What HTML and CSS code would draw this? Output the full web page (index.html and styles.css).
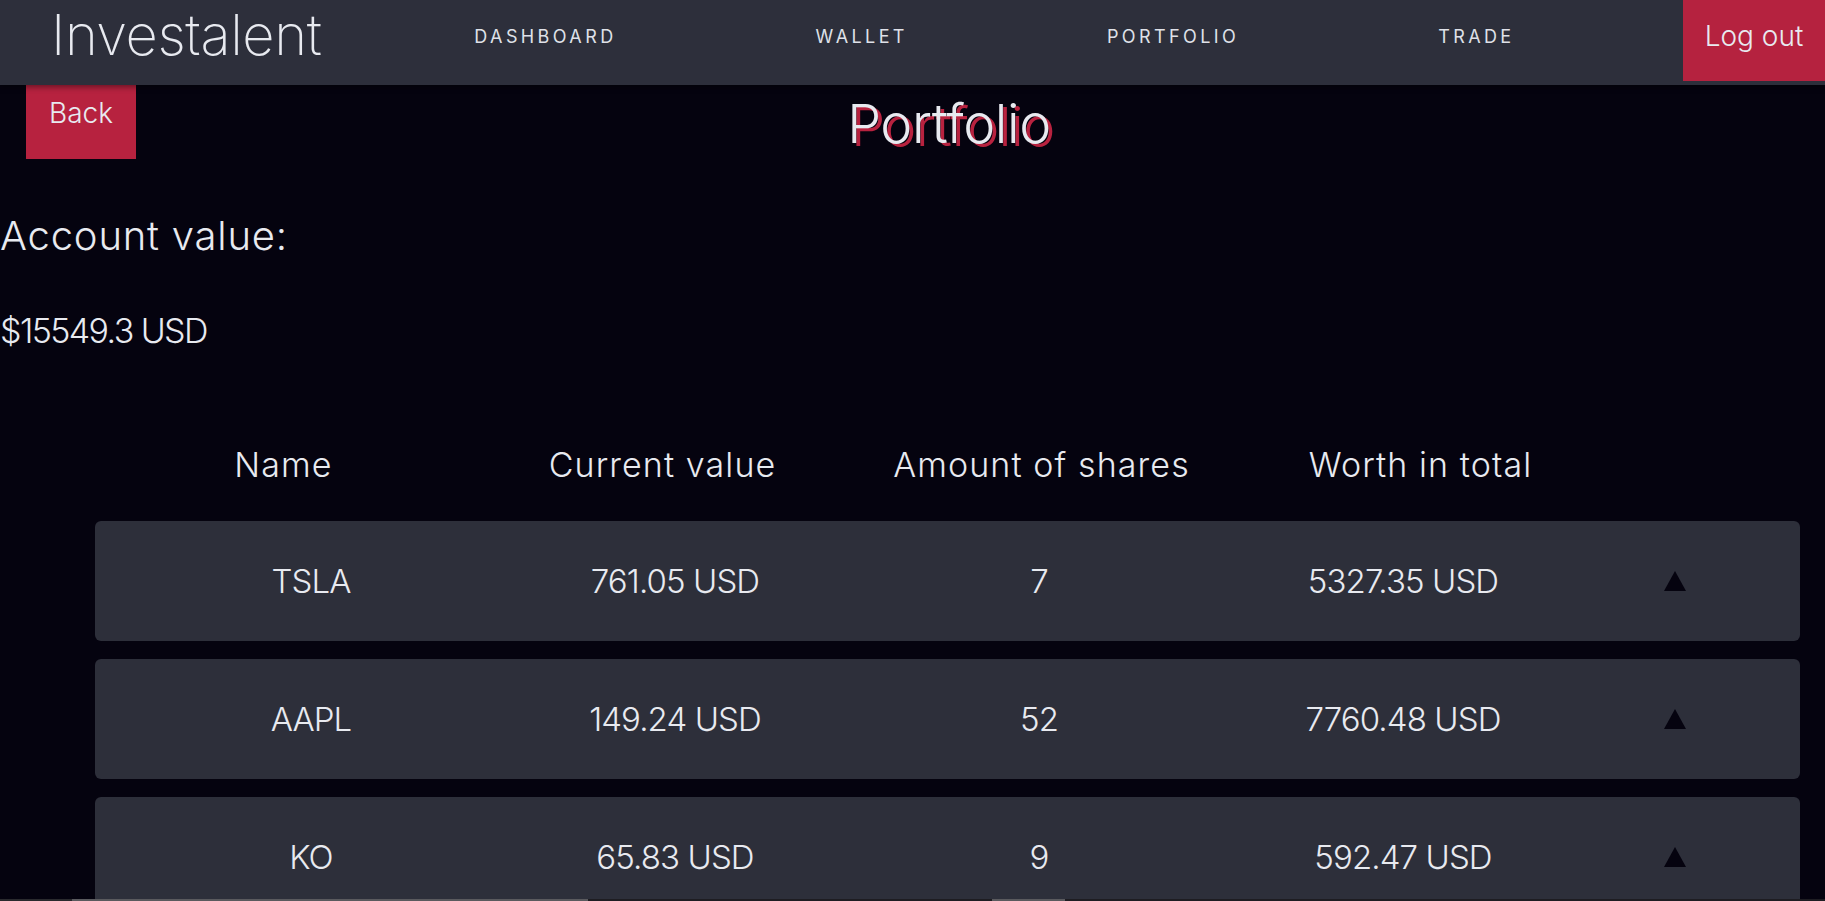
FILE: index.html
```html
<!DOCTYPE html>
<html lang="en">
<head>
<meta charset="utf-8">
<title>Investalent - Portfolio</title>
<link rel="stylesheet" href="styles.css">
</head>
<body>
<nav class="topbar">
  <div class="logo">Investalent</div>
  <ul class="links">
    <li>DASHBOARD</li>
    <li>WALLET</li>
    <li>PORTFOLIO</li>
    <li>TRADE</li>
  </ul>
  <button class="logout">Log out</button>
</nav>
<main class="page">
  <div class="title-row">
    <button class="back">Back</button>
    <h1 class="title">Portfolio</h1>
  </div>
  <h2 class="account-label">Account value:</h2>
  <p class="account-value">$15549.3 USD</p>
  <div class="table-head">
    <span>Name</span>
    <span>Current value</span>
    <span>Amount of shares</span>
    <span>Worth in total</span>
  </div>
  <div class="rows">
    <div class="row">
      <span>TSLA</span><span>761.05 USD</span><span>7</span><span>5327.35 USD</span>
      <span class="arrow"><svg width="22" height="20" viewBox="0 0 22 20"><polygon points="11,0 22,20 0,20" fill="#05030f"/></svg></span>
    </div>
    <div class="row">
      <span>AAPL</span><span>149.24 USD</span><span>52</span><span>7760.48 USD</span>
      <span class="arrow"><svg width="22" height="20" viewBox="0 0 22 20"><polygon points="11,0 22,20 0,20" fill="#05030f"/></svg></span>
    </div>
    <div class="row">
      <span>KO</span><span>65.83 USD</span><span>9</span><span>592.47 USD</span>
      <span class="arrow"><svg width="22" height="20" viewBox="0 0 22 20"><polygon points="11,0 22,20 0,20" fill="#05030f"/></svg></span>
    </div>
  </div>
</main>
<div class="hscroll"><span class="sb-a"></span><span class="sb-b"></span><span class="sb-c"></span><span class="sb-d"></span><span class="sb-e"></span></div>
</body>
</html>
```
FILE: styles.css
```css
html, body {
  margin: 0;
  padding: 0;
}
body {
  background: #05030f;
  color: #e8eaf0;
  font-family: Inter, "Open Sans", sans-serif;
  font-weight: 300;
  overflow: hidden;
}
.topbar {
  position: relative;
  z-index: 2;
  height: 85px;
  background: #2d2f3b;
  display: flex;
  align-items: flex-start;
  box-shadow: 0 2px 6px rgba(0, 0, 0, 0.45);
}
.logo {
  margin-left: 51px;
  margin-top: 3px;
  font-size: 56px;
  font-weight: 200;
  line-height: 64px;
  letter-spacing: -0.4px;
}
.links {
  list-style: none;
  margin: 25px 0 0 153px;
  padding: 0;
  display: flex;
  gap: 199px;
  font-size: 18px;
  font-weight: 400;
  letter-spacing: 3.4px;
  line-height: 24px;
  color: #dfe1e8;
}
.logout {
  margin-left: auto;
  width: 142px;
  height: 81px;
  border: none;
  background: #b5223f;
  color: #e8eaf0;
  font-family: inherit;
  font-weight: 300;
  font-size: 28px;
  padding: 0 0 9px;
}
.title-row {
  display: flex;
  align-items: flex-start;
}
.back {
  margin-left: 26px;
  width: 110px;
  height: 74px;
  border: none;
  background: #b7223f;
  color: #e8eaf0;
  font-family: inherit;
  font-weight: 300;
  font-size: 28px;
  padding: 0 0 18px;
}
.title {
  flex: 1;
  margin: 6px 63px 0 0;
  text-align: center;
  font-size: 54px;
  font-weight: 300;
  line-height: 65px;
  letter-spacing: -0.4px;
  text-shadow: 4px 3px 0 #b8223f;
}
.account-label {
  margin: 53px 0 0;
  font-size: 40px;
  font-weight: 300;
  line-height: 48px;
  letter-spacing: 0.8px;
}
.account-value {
  margin: 50px 0 0;
  font-size: 34px;
  line-height: 41px;
  letter-spacing: -1.6px;
}
.table-head {
  margin: 94px 0 0 94px;
  display: grid;
  grid-template-columns: repeat(4, 379px);
  font-size: 34px;
  line-height: 40px;
  letter-spacing: 1.1px;
  text-align: center;
}
.rows {
  margin: 36px 25px 0 95px;
  display: flex;
  flex-direction: column;
  gap: 18px;
}
.row {
  height: 120px;
  background: #2d2f3a;
  border-radius: 6px;
  display: grid;
  grid-template-columns: repeat(4, 364px) 180px;
  align-items: center;
  padding-left: 34px;
  font-size: 33px;
  letter-spacing: -0.9px;
  text-align: center;
}
.arrow svg {
  display: block;
  margin: 0 auto;
}
.hscroll {
  position: fixed;
  left: 0;
  right: 0;
  bottom: 0;
  height: 2px;
  display: flex;
  background: #1e1d22;
}
.sb-a { width: 72px; background: #2a2a2e; }
.sb-b { width: 516px; background: #5a5a5e; }
.sb-c { width: 404px; background: #1e1d22; }
.sb-d { width: 73px; background: #5a5a5e; }
.sb-e { flex: 1; background: #1e1d22; }
```
